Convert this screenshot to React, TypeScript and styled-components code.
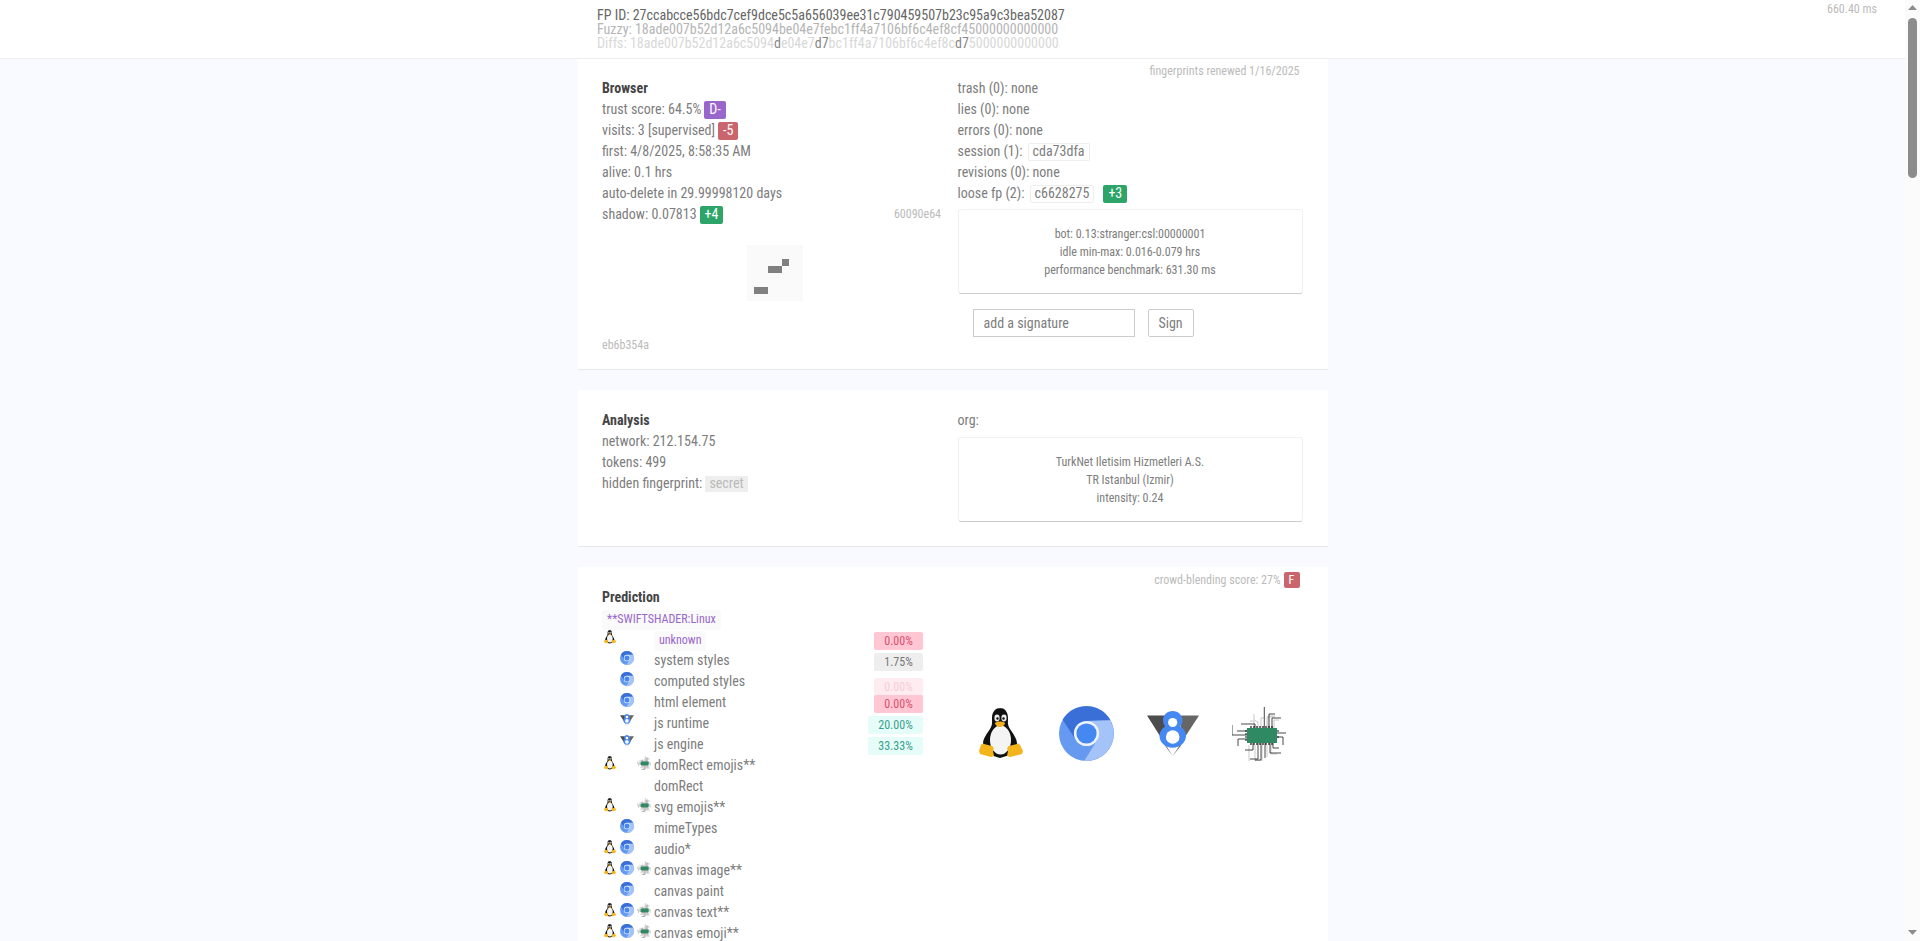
import React from "react";
import styled, { createGlobalStyle } from "styled-components";

const Global = createGlobalStyle`
  html, body { margin: 0; padding: 0; background: #f9faff; }
  body {
    font-family: "Roboto Condensed", "Liberation Sans Narrow", Roboto, sans-serif;
    font-stretch: 75%;
    font-size: 14px;
    line-height: 21px;
    color: #7d7d7d;
    min-height: 5320px;
    padding-right: 15px;
  }
`;

const Track = styled.div`
  position: fixed;
  top: 0;
  right: 0;
  bottom: 0;
  z-index: 3;
  width: 15px;
  background: #fbfbfb;
`;
const Thumb = styled.div`
  position: absolute;
  top: 18px;
  left: 3px;
  width: 9px;
  height: 160px;
  border-radius: 5px;
  background: #8c8c8c;
`;
const Arrow = styled.svg<{ $down?: boolean }>`
  position: absolute;
  left: 3px;
  ${(p) => (p.$down ? "bottom: 6px;" : "top: 5px;")}
  width: 9px;
  height: 5px;
`;

const Header = styled.header`
  position: sticky;
  top: 0;
  z-index: 2;
  display: grid;
  grid-template-columns: 1fr 750px 1fr;
  height: 58px;
  box-sizing: content-box;
  background: #fff;
  border-bottom: 1px solid #eee;
`;
const HeaderIds = styled.div`
  grid-column: 2;
  padding: 8px 0 0 19.5px;
  white-space: nowrap;
`;
const IdLine = styled.div<{ $tone: string }>`
  line-height: 14px;
  color: ${(p) => p.$tone};
`;
const Strong = styled.span`
  color: #888;
`;
const Timer = styled.div`
  justify-self: end;
  padding: 2px 28px 0 0;
  font-size: 12px;
  line-height: 14px;
  color: #bbb;
`;
const Page = styled.main`
  width: 750px;
  margin: 0 auto;
  display: flex;
  flex-direction: column;
  gap: 20px;
`;
const Card = styled.section<{ $height?: number; $top?: number }>`
  position: relative;
  box-sizing: border-box;
  display: grid;
  grid-template-columns: 345px 345px;
  column-gap: 10.5px;
  align-content: start;
  padding: ${(p) => p.$top ?? 20}px 25px 0 24.5px;
  background: #fff;
  border-bottom: 1px solid #e8e8e8;
  ${(p) => (p.$height ? `height: ${p.$height}px;` : "")}
`;
const Note = styled.div<{ $top: number }>`
  position: absolute;
  top: ${(p) => p.$top}px;
  right: 28px;
  display: flex;
  align-items: center;
  gap: 3px;
  font-size: 12px;
  line-height: 14px;
  color: #bbb;
`;
const Column = styled.div`
  display: flex;
  flex-direction: column;
  min-width: 0;
`;
const Title = styled.div`
  font-weight: 700;
  color: #444;
`;
const Line = styled.div`
  display: flex;
  align-items: center;
  height: 21px;
  white-space: pre;
`;
const SpacedLine = styled(Line)`
  justify-content: space-between;
  padding-right: 6px;
`;
const Badge = styled.span<{ $bg: string }>`
  display: inline-flex;
  align-items: center;
  justify-content: center;
  height: 18px;
  padding: 0 5px;
  margin-left: 3px;
  border-radius: 2px;
  background: ${(p) => p.$bg};
  color: #fff;
`;
const SmallBadge = styled(Badge)`
  height: 16px;
  width: 16px;
  padding: 0;
  margin: 0;
`;
const Chip = styled.span`
  display: inline-flex;
  align-items: center;
  height: 18px;
  box-sizing: border-box;
  padding: 0 4px;
  margin-left: 5px;
  border: 1px solid #eee;
  border-radius: 2px;
`;
const LooseBadge = styled(Badge)`
  margin-left: 9px;
`;
const Hash = styled.span`
  font-size: 12px;
  color: #bbb;
`;
const HashBlock = styled(Hash)`
  display: block;
  margin-top: 35px;
  line-height: 18px;
`;
const Identicon = styled.svg`
  display: block;
  align-self: center;
  width: 56px;
  height: 56px;
  margin-top: 20px;
  background: #fafafa;
`;
const InfoBox = styled.div`
  box-sizing: border-box;
  height: 85px;
  padding-top: 15px;
  border: 1px solid #f1f1f1;
  border-bottom-color: #ccc;
  border-radius: 3px;
  text-align: center;
  font-size: 12px;
  line-height: 18px;
`;
const BoxGap = styled.div<{ $gap: number }>`
  margin-top: ${(p) => p.$gap}px;
`;
const SignRow = styled.form`
  display: flex;
  gap: 13px;
  margin: 15px 0 0 15px;
`;
const SignInput = styled.input`
  box-sizing: border-box;
  width: 162px;
  height: 28px;
  padding: 0 10px;
  border: 1px solid #ccc;
  background: #fff;
  font: inherit;
  color: #7d7d7d;
  &::placeholder { color: #7d7d7d; opacity: 1; }
`;
const SignButton = styled.button`
  box-sizing: border-box;
  width: 46px;
  height: 28px;
  padding: 0;
  border: 1px solid #ccc;
  border-radius: 2px;
  background: #fff;
  font: inherit;
  color: #7d7d7d;
`;
const Secret = styled.span`
  display: inline-flex;
  align-items: center;
  height: 16px;
  padding: 0 4px;
  margin-left: 3px;
  background: #eee;
  color: #bbb;
`;
const Purple = styled.span`
  display: inline-flex;
  align-items: center;
  height: 20px;
  padding: 0 5px;
  background: #fafafa;
  border-radius: 2px;
  font-size: 12px;
  color: #9966cc;
`;
const ChipLine = styled.div`
  height: 22px;
`;
const Row = styled.div`
  display: grid;
  grid-template-columns: 18px 17px 17px 1fr auto;
  height: 21px;
  padding-right: 24px;
`;
const Cell = styled.div<{ $pad?: number }>`
  height: 21px;
  min-width: 0;
  padding-left: ${(p) => p.$pad ?? 0}px;
`;
const Label = styled.div`
  grid-column: 4;
  margin-top: -1px;
  white-space: nowrap;
`;
const Pct = styled.span<{ $bg: string; $fg: string; $top: number; $wide?: boolean }>`
  grid-column: 5;
  display: flex;
  align-items: center;
  justify-content: center;
  box-sizing: border-box;
  width: ${(p) => (p.$wide ? 55 : 49)}px;
  height: 18px;
  margin-top: ${(p) => p.$top}px;
  font-size: 12px;
  border-radius: 2px;
  background: ${(p) => p.$bg};
  color: ${(p) => p.$fg};
`;
const Logos = styled.div`
  display: grid;
  grid-template-columns: repeat(4, 1fr);
  justify-items: center;
  align-items: center;
  height: 55px;
  margin-top: 119px;
`;

const Tux = ({ w = 12, h = 14 }: { w?: number; h?: number }) => (
  <svg width={w} height={h} viewBox="0 0 44 52" display="block">
    <path d="M21.500 0c-6 0-8.500 5-8.500 10 0 5 .5 7-2 11-3 5-7 9-7 15 0 4 1 8 4 10l13 4 13-4c3-2 4-6 4-10 0-6-4-10-7-15-2.500-4-2-6-2-11 0-5-2.500-10-8-10z" fill="#111" />
    <ellipse cx="21.500" cy="32" rx="10.500" ry="14.500" fill="#f4f4f4" />
    <ellipse cx="18" cy="10" rx="2.600" ry="3.400" fill="#eee" />
    <ellipse cx="25" cy="10" rx="2.600" ry="3.400" fill="#eee" />
    <circle cx="18.500" cy="10.500" r="1.200" fill="#111" />
    <circle cx="24.500" cy="10.500" r="1.200" fill="#111" />
    <path d="M16 15c2-2 8-2 10 0 0 2-3 4-5 4s-5-2-5-4z" fill="#f2b01e" />
    <path d="M5 36l8 2c2 1 2 3 1 5l1 5-3 1-11-3-1-3 2-6c1-1 2-2 3-1z" fill="#f4b51c" />
    <path d="M38 36l-8 2c-2 1-2 3-1 5l-1 5 3 1 12-3 1-3-3-6c-1-1-2-2-3-1z" fill="#f4b51c" />
  </svg>
);

const Chromium = ({ size = 14 }: { size?: number }) => (
  <svg width={size} height={size} viewBox="0 0 48 48" display="block">
    <circle cx="24" cy="24" r="24" fill="#659af0" />
    <path d="M3.200 12A24 24 0 0 1 44.800 12.500L24 13v11l-9 6z" fill="#3b6fd8" />
    <path d="M44.800 12.500A24 24 0 0 1 22 47.900L33.500 29.500 24 13z" fill="#a4c3f8" />
    <circle cx="24" cy="24" r="11" fill="#eef3fd" />
    <circle cx="24" cy="24" r="8.800" fill="#4688f1" />
  </svg>
);

const V8 = ({ w = 14, h = 12 }: { w?: number; h?: number }) => (
  <svg width={w} height={h} viewBox="0 0 52 45" display="block">
    <path d="M0 4.500h18v30l7.700 10.500z" fill="#4c4c4c" />
    <path d="M52 4.500H34v30L25.700 45z" fill="#666" />
    <path d="M25.700 0c5.600 0 9.800 4.200 9.800 9.500 0 2.400-.8 4.300-2.200 5.700 3.400 2.300 5.700 5.900 5.700 9.500 0 6.900-5.900 12-13.300 12s-13.200-5.100-13.200-12c0-3.600 2.300-7.200 5.700-9.500-1.400-1.400-2.200-3.300-2.200-5.700C15.900 4.200 20.100 0 25.700 0z" fill="#4688f1" />
    <circle cx="25.700" cy="11.500" r="4.600" fill="#fff" />
    <circle cx="25.700" cy="26" r="6.800" fill="#fff" />
  </svg>
);

const Cpu = ({ size = 14 }: { size?: number }) => (
  <svg width={size} height={size} viewBox="7 6 54 54" display="block">
    <path
      d="M29 27v-7h-4M33 27v-6l-4-2v-6M36 27V17h3M42 27V16h8M43 27V15h7M49 27v-8h5M24 44v16M30 44v18M37 44v16h-7M42 44v12M46 44v9h6"
      fill="none"
      stroke="#bbb"
      strokeWidth="0.800"
    />
    <path
      d="M39.300 27V6M44 27V13h6M47 27V17h9M30 27v-4H16M22 30H12M7 24v10h15M22 38h-9v7M52 32h9M52 36h6v8M28 42v7H20M33 42v16H25M36 42v17h-6M40 42v15M45 42v10h11M48 42v5h6"
      fill="none"
      stroke="#1c1c1c"
      strokeWidth="0.800"
    />
    <path d="M26 42v2M29 42v2M32 42v2M35 42v2M38 42v2M41 42v2M44 42v2M47 42v2M26 25v2M29 25v2M32 25v2M35 25v2M38 25v2M41 25v2M44 25v2M47 25v2M20 30h2M20 33h2M20 36h2M20 39h2M52 30h2M52 36h2" stroke="#111" strokeWidth="1.200" />
    <rect x="22" y="27" width="30" height="15" fill="#2f8a64" />
  </svg>
);

const Mark = { linux: <Tux />, chrome: <Chromium />, v8: <V8 />, cpu: <Cpu /> };

type Pred = {
  label: string;
  linux?: boolean;
  mid?: "chrome" | "v8";
  cpu?: boolean;
  pct?: { text: string; bg: string; fg: string; top: number; wide?: boolean };
  purple?: boolean;
};

const pink = { bg: "#ffc7d3", fg: "#d9506f", top: 2 };
const mint = { bg: "#e6fcf8", fg: "#38a18c", top: 2, wide: true };

const rows: Pred[] = [
  { label: "unknown", linux: true, purple: true, pct: { text: "0.00%", ...pink } },
  { label: "system styles", mid: "chrome", pct: { text: "1.75%", bg: "#eee", fg: "#777", top: 2 } },
  { label: "computed styles", mid: "chrome", pct: { text: "0.00%", bg: "#ffecf0", fg: "#f8ccd6", top: 6 } },
  { label: "html element", mid: "chrome", pct: { text: "0.00%", ...pink } },
  { label: "js runtime", mid: "v8", pct: { text: "20.00%", ...mint } },
  { label: "js engine", mid: "v8", pct: { text: "33.33%", ...mint } },
  { label: "domRect emojis**", linux: true, cpu: true },
  { label: "domRect" },
  { label: "svg emojis**", linux: true, cpu: true },
  { label: "mimeTypes", mid: "chrome" },
  { label: "audio*", linux: true, mid: "chrome" },
  { label: "canvas image**", linux: true, mid: "chrome", cpu: true },
  { label: "canvas paint", mid: "chrome" },
  { label: "canvas text**", linux: true, mid: "chrome", cpu: true },
  { label: "canvas emoji**", linux: true, mid: "chrome", cpu: true },
];

export default function App() {
  return (
    <>
      <Global />
      <Track>
        <Arrow viewBox="0 0 9 5"><path d="M4.500 0L9 5H0z" fill="#8c8c8c" /></Arrow>
        <Thumb />
        <Arrow $down viewBox="0 0 9 5"><path d="M0 0h9L4.500 5z" fill="#8c8c8c" /></Arrow>
      </Track>
      <Header>
        <HeaderIds>
          <IdLine $tone="#666">FP ID: 27ccabcce56bdc7cef9dce5c5a656039ee31c790459507b23c95a9c3bea52087</IdLine>
          <IdLine $tone="#b5b5b5">Fuzzy: 18ade007b52d12a6c5094be04e7febc1ff4a7106bf6c4ef8cf45000000000000</IdLine>
          <IdLine $tone="#d8d8d8">
            Diffs: 18ade007b52d12a6c5094<Strong>d</Strong>e04e7<Strong>d7</Strong>bc1ff4a7106bf6c4ef8c
            <Strong>d7</Strong>5000000000000
          </IdLine>
        </HeaderIds>
        <Timer>660.40 ms</Timer>
      </Header>
      <Page>
        <Card $height={311} $top={19}>
          <Note $top={5}>fingerprints renewed 1/16/2025</Note>
          <Column>
            <Title>Browser</Title>
            <Line>trust score: 64.5%<Badge $bg="#9966cc">D-</Badge></Line>
            <Line>visits: 3 [supervised]<Badge $bg="#ca656e">-5</Badge></Line>
            <Line>first: 4/8/2025, 8:58:35 AM</Line>
            <Line>alive: 0.1 hrs</Line>
            <Line>auto-delete in 29.99998120 days</Line>
            <SpacedLine>
              <span>shadow: 0.07813<Badge $bg="#2da568">+4</Badge></span>
              <Hash>60090e64</Hash>
            </SpacedLine>
            <Identicon viewBox="0 0 56 56">
              <path d="M35 14h7v7h-7zM21 21h14v7H21zM7 42h14v7H7z" fill="#808080" />
            </Identicon>
            <HashBlock>eb6b354a</HashBlock>
          </Column>
          <Column>
            <Line>trash (0): none</Line>
            <Line>lies (0): none</Line>
            <Line>errors (0): none</Line>
            <Line>session (1):<Chip>cda73dfa</Chip></Line>
            <Line>revisions (0): none</Line>
            <Line>loose fp (2):<Chip>c6628275</Chip><LooseBadge $bg="#2da568">+3</LooseBadge></Line>
            <BoxGap $gap={5}>
              <InfoBox>
                <div>bot: 0.13:stranger:csl:00000001</div>
                <div>idle min-max: 0.016-0.079 hrs</div>
                <div>performance benchmark: 631.30 ms</div>
              </InfoBox>
            </BoxGap>
            <SignRow>
              <SignInput placeholder="add a signature" />
              <SignButton type="button">Sign</SignButton>
            </SignRow>
          </Column>
        </Card>

        <Card $height={157}>
          <Column>
            <Title>Analysis</Title>
            <Line>network: 212.154.75</Line>
            <Line>tokens: 499</Line>
            <Line>hidden fingerprint:<Secret>secret</Secret></Line>
          </Column>
          <Column>
            <Line>org:</Line>
            <BoxGap $gap={6}>
              <InfoBox>
                <div>TurkNet Iletisim Hizmetleri A.S.</div>
                <div>TR Istanbul (Izmir)</div>
                <div>intensity: 0.24</div>
              </InfoBox>
            </BoxGap>
          </Column>
        </Card>

        <Card>
          <Note $top={5}>
            crowd-blending score: 27%<SmallBadge $bg="#ca656e">F</SmallBadge>
          </Note>
          <Column>
            <Title>Prediction</Title>
            <ChipLine><Purple>**SWIFTSHADER:Linux</Purple></ChipLine>
            {rows.map((r) => (
              <Row key={r.label}>
                <Cell $pad={2}>{r.linux && Mark.linux}</Cell>
                <Cell>{r.mid && Mark[r.mid]}</Cell>
                <Cell>{r.cpu && Mark.cpu}</Cell>
                <Label>{r.purple ? <Purple>{r.label}</Purple> : r.label}</Label>
                {r.pct && (
                  <Pct $bg={r.pct.bg} $fg={r.pct.fg} $top={r.pct.top} $wide={r.pct.wide}>
                    {r.pct.text}
                  </Pct>
                )}
              </Row>
            ))}
          </Column>
          <Logos>
            <Tux w={44} h={52} />
            <Chromium size={55} />
            <V8 w={52} h={45} />
            <Cpu size={54} />
          </Logos>
        </Card>
      </Page>
    </>
  );
}
